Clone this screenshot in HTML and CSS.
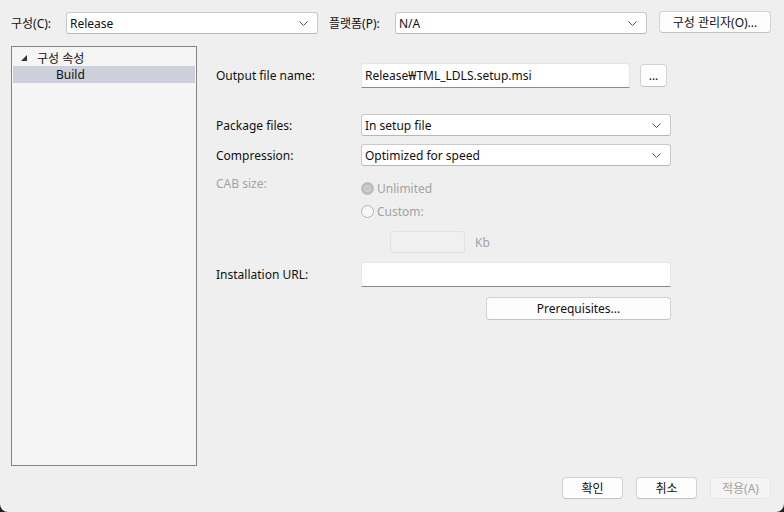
FILE: index.html
```html
<!DOCTYPE html>
<html lang="ko">
<head>
    <meta charset="UTF-8">
    <title>속성 페이지</title>
    <link rel="stylesheet" href="styles.css">
</head>
<body>
    <div class="window">
        <div class="toolbar">
            <span class="top-label">구성(C):</span>
            <div class="combo combo-top">
                <span>Release</span>
                <svg class="chevron" width="9" height="5" viewBox="0 0 9 5"><polyline points="0.5,0.5 4.5,4.5 8.5,0.5" fill="none" stroke="#555" stroke-width="1"/></svg>
            </div>
            <span class="top-label platform">플랫폼(P):</span>
            <div class="combo combo-top">
                <span>N/A</span>
                <svg class="chevron" width="9" height="5" viewBox="0 0 9 5"><polyline points="0.5,0.5 4.5,4.5 8.5,0.5" fill="none" stroke="#555" stroke-width="1"/></svg>
            </div>
            <button class="btn btn-config">구성 관리자(O)...</button>
        </div>

        <div class="main">
            <div class="tree">
                <div class="tree-item">
                    <svg class="expander" width="7" height="7" viewBox="0 0 7 7"><polygon points="6,0 6,6 0,6" fill="#333"/></svg>
                    <span>구성 속성</span>
                </div>
                <div class="tree-item tree-child selected">Build</div>
            </div>

            <div class="form">
                <div class="row row-output">
                    <label class="field-label">Output file name:</label>
                    <div class="textbox textbox-output">Release₩TML_LDLS.setup.msi</div>
                    <button class="btn btn-browse">...</button>
                </div>

                <div class="row row-package">
                    <label class="field-label">Package files:</label>
                    <div class="combo combo-wide">
                        <span>In setup file</span>
                        <svg class="chevron" width="9" height="5" viewBox="0 0 9 5"><polyline points="0.5,0.5 4.5,4.5 8.5,0.5" fill="none" stroke="#555" stroke-width="1"/></svg>
                    </div>
                </div>

                <div class="row row-compression">
                    <label class="field-label">Compression:</label>
                    <div class="combo combo-wide">
                        <span>Optimized for speed</span>
                        <svg class="chevron" width="9" height="5" viewBox="0 0 9 5"><polyline points="0.5,0.5 4.5,4.5 8.5,0.5" fill="none" stroke="#555" stroke-width="1"/></svg>
                    </div>
                </div>

                <div class="row row-cab">
                    <label class="field-label disabled">CAB size:</label>
                    <div class="radio-group">
                        <div class="radio-row">
                            <span class="radio checked"></span>
                            <span class="disabled">Unlimited</span>
                        </div>
                        <div class="radio-row">
                            <span class="radio"></span>
                            <span class="disabled">Custom:</span>
                        </div>
                        <div class="size-row">
                            <div class="textbox-small"></div>
                            <span class="disabled">Kb</span>
                        </div>
                    </div>
                </div>

                <div class="row row-url">
                    <label class="field-label">Installation URL:</label>
                    <div class="textbox textbox-url"></div>
                </div>

                <div class="row row-prereq">
                    <button class="btn btn-prereq">Prerequisites...</button>
                </div>
            </div>
        </div>

        <div class="footer">
            <button class="btn btn-footer">확인</button>
            <button class="btn btn-footer">취소</button>
            <button class="btn btn-footer btn-disabled">적용(A)</button>
        </div>
    </div>
</body>
</html>
```

FILE: styles.css
```css
html {
    background: #1e1e1e;
}

body {
    margin: 0;
    font-family: "Noto Sans", "Noto Sans CJK KR", sans-serif;
    font-size: 12px;
    color: #111;
}

.window {
    width: 784px;
    height: 512px;
    background: #efefef;
    border-radius: 0 0 8px 8px;
    overflow: hidden;
}

/* 상단 구성 / 플랫폼 */
.toolbar {
    display: flex;
    align-items: center;
    padding: 11px 0 0 11px;
    height: 23px;
}

.top-label {
    width: 55px;
}

.top-label.platform {
    width: 66px;
    margin-left: 11px;
}

.combo {
    box-sizing: border-box;
    height: 22px;
    background: #fff;
    border: 1px solid #c9c9c9;
    border-bottom-color: #b8b8b8;
    border-radius: 3px;
    display: flex;
    align-items: center;
    justify-content: space-between;
    padding: 0 9px 0 3px;
}

.combo-top {
    width: 252px;
    margin-top: 1px;
}

.combo-wide {
    width: 310px;
}

.chevron {
    display: block;
}

.btn {
    box-sizing: border-box;
    font-family: inherit;
    font-size: 12px;
    color: #111;
    background: #fdfdfd;
    border: 1px solid #d2d2d2;
    border-bottom-color: #c2c2c2;
    border-radius: 4px;
    padding: 0;
    height: 23px;
}

.btn-config {
    width: 112px;
    height: 22px;
    margin-left: 12px;
    margin-top: -1px;
}

/* 본문 */
.main {
    display: flex;
    margin-top: 12px;
    padding-left: 11px;
}

.tree {
    box-sizing: border-box;
    width: 186px;
    height: 420px;
    background: #f5f5f5;
    border: 1px solid #858585;
    padding: 2px 1px 1px;
}

.tree-item {
    display: flex;
    align-items: center;
    height: 17px;
    padding-left: 8px;
}

.expander {
    margin-right: 9px;
    margin-top: 1px;
}

.tree-child {
    padding-left: 43px;
}

.tree-item.selected {
    background: #cdcfdb;
}

.form {
    padding: 17px 0 0 19px;
}

.row {
    display: flex;
    align-items: center;
}

.field-label {
    width: 145px;
}

.disabled {
    color: #a3a3a3;
}

.textbox {
    box-sizing: border-box;
    height: 25px;
    background: #fff;
    border: 1px solid #e6e6e6;
    border-bottom-color: #8a8a8a;
    border-radius: 3px 3px 0 0;
    padding: 0 3px;
    display: flex;
    align-items: center;
}

.textbox-output {
    width: 269px;
}

.btn-browse {
    width: 27px;
    margin-left: 10px;
}

.row-package {
    margin-top: 26px;
}

.row-compression {
    margin-top: 8px;
}

.row-cab {
    align-items: flex-start;
    margin-top: 10px;
}

.row-cab .field-label {
    line-height: 16px;
}

.radio-group {
    padding-top: 1px;
}

.radio-row {
    display: flex;
    align-items: center;
    height: 23px;
}

.radio {
    box-sizing: border-box;
    width: 13px;
    height: 13px;
    border-radius: 50%;
    border: 1px solid #b5b5b5;
    background: #f7f7f7;
    margin-right: 3px;
}

.radio.checked {
    background: #c4c4c4;
    border: 3px solid #bcbcbc;
    box-shadow: inset 0 0 0 1px #d8d8d8;
}

.size-row {
    display: flex;
    align-items: center;
    margin: 8px 0 0 29px;
}

.textbox-small {
    box-sizing: border-box;
    width: 75px;
    height: 22px;
    border: 1px solid #e2e2e2;
    border-radius: 3px;
    background: #f0f0f0;
    margin-right: 10px;
}

.row-url {
    margin-top: 9px;
}

.textbox-url {
    width: 310px;
}

.row-prereq {
    justify-content: flex-end;
    margin-top: 10px;
    padding-left: 269px;
}

.btn-prereq {
    width: 185px;
}

/* 하단 버튼 */
.footer {
    display: flex;
    justify-content: flex-end;
    gap: 13px;
    padding-right: 13px;
    margin-top: 11px;
}

.btn-footer {
    width: 61px;
    height: 22px;
}

.btn-disabled {
    background: #f4f4f4;
    border-color: #e6e6e6;
    color: #a3a3a3;
}
```
